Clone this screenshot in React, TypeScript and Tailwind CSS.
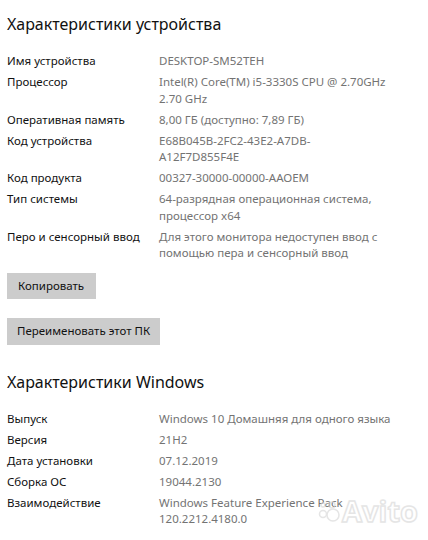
const font = { fontFamily: '"Noto Sans", "Open Sans", sans-serif' };

type Row = { label: string; value: string[] };

const deviceRows: Row[] = [
  { label: "Имя устройства", value: ["DESKTOP-SM52TEH"] },
  { label: "Процессор", value: ["Intel(R) Core(TM) i5-3330S CPU @ 2.70GHz", "2.70 GHz"] },
  { label: "Оперативная память", value: ["8,00 ГБ (доступно: 7,89 ГБ)"] },
  { label: "Код устройства", value: ["E68B045B-2FC2-43E2-A7DB-", "A12F7D855F4E"] },
  { label: "Код продукта", value: ["00327-30000-00000-AAOEM"] },
  { label: "Тип системы", value: ["64-разрядная операционная система,", "процессор x64"] },
  { label: "Перо и сенсорный ввод", value: ["Для этого монитора недоступен ввод с", "помощью пера и сенсорный ввод"] },
];

const windowsRows: Row[] = [
  { label: "Выпуск", value: ["Windows 10 Домашняя для одного языка"] },
  { label: "Версия", value: ["21H2"] },
  { label: "Дата установки", value: ["07.12.2019"] },
  { label: "Сборка ОС", value: ["19044.2130"] },
  { label: "Взаимодействие", value: ["Windows Feature Experience Pack", "120.2212.4180.0"] },
];

function Rows({ rows }: { rows: Row[] }) {
  return (
    <div className="flex flex-col gap-[4.5px]">
      {rows.map((r) => (
        <div key={r.label} className="flex text-[11.5px] leading-[16.5px]">
          <div className="w-[152px] shrink-0 text-[#111]">{r.label}</div>
          <div className="text-[#737373] whitespace-nowrap">
            {r.value.map((line) => (
              <div key={line}>{line}</div>
            ))}
          </div>
        </div>
      ))}
    </div>
  );
}

export default function App() {
  return (
    <div className="relative w-[428px] h-[540px] bg-white overflow-hidden px-[7px] pt-[10px]" style={font}>
      <h1 className="text-[16px] leading-[28px] text-[#111] font-normal">Характеристики устройства</h1>
      <div className="mt-[15px]">
        <Rows rows={deviceRows} />
      </div>
      <button className="mt-[11px] block h-[26px] pl-[11px] pr-[12px] bg-[#cccccc] text-[11.5px] text-[#111]">
        Копировать
      </button>
      <button className="mt-[19px] block h-[27px] px-[10px] bg-[#cccccc] text-[11.5px] text-[#111]">
        Переименовать этот ПК
      </button>
      <h2 className="mt-[23px] text-[16px] leading-[28px] text-[#111] font-normal">Характеристики Windows</h2>
      <div className="mt-[15px]">
        <Rows rows={windowsRows} />
      </div>

      {/* watermark */}
      <div className="absolute right-[10px] bottom-[15px] flex items-center gap-[2px] opacity-60 pointer-events-none">
        <svg width="22" height="22" viewBox="0 0 22 22" fill="none" stroke="#d4d4d4" strokeWidth="1.5">
          <circle cx="15" cy="15" r="6" />
          <circle cx="5" cy="14" r="3.5" />
          <circle cx="14" cy="5" r="3" />
          <circle cx="5" cy="5" r="2" />
        </svg>
        <span
          className="text-[29px] leading-none font-bold text-white"
          style={{ fontFamily: '"Open Sans", sans-serif', WebkitTextStroke: "1.5px #d4d4d4" }}
        >
          Avito
        </span>
      </div>
    </div>
  );
}
